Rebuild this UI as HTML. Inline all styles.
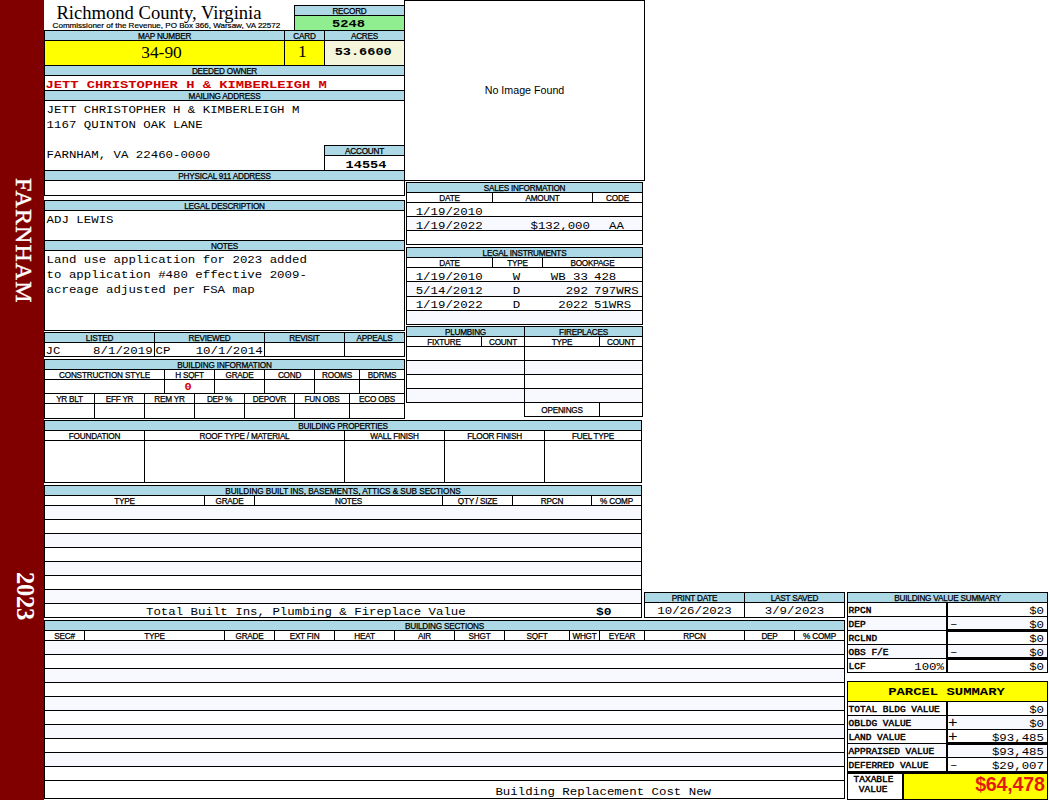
<!DOCTYPE html>
<html><head><meta charset="utf-8"><title>Richmond County, Virginia - Property Card</title>
<style>
html,body{margin:0;padding:0;background:#fff}
#p{position:relative;width:1050px;height:800px;overflow:hidden;background:#fff}
#p div{position:absolute;box-sizing:content-box;white-space:nowrap;overflow:visible}
.l{font-family:"Liberation Sans",sans-serif;font-size:8.2px;color:#000;letter-spacing:-.22px;-webkit-text-stroke:.25px #000}
.st{font-family:"Liberation Sans",sans-serif;font-size:8.05px;color:#000;-webkit-text-stroke:.2px #000}
.ti{font-family:"Liberation Serif",serif;font-size:18.6px;color:#000}
.se{font-family:"Liberation Serif",serif;color:#000}
.m{font-family:"Liberation Mono",monospace;font-size:12.4px;color:#000;transform:scaleY(.89);transform-origin:0 50%}
.mb{font-family:"Liberation Mono",monospace;font-weight:bold;color:#000;transform:scaleY(.85);transform-origin:0 50%}
.ow{font-family:"Liberation Mono",monospace;font-weight:bold;font-size:13.8px;color:#d00000;transform:scaleY(.84);transform-origin:0 50%}
.sl{font-family:"Liberation Mono",monospace;font-weight:normal;-webkit-text-stroke:.45px #000;font-size:9.5px;color:#000;transform:scaleY(.88);transform-origin:0 50%}
.ni{font-family:"Liberation Sans",sans-serif;font-size:10.7px;color:#000}
.tv{font-family:"Liberation Sans",sans-serif;font-weight:bold;font-size:19.7px;letter-spacing:-.25px;color:#e41a10}
.sb{font-family:"Liberation Serif",serif;color:#fff;width:0;height:0;overflow:visible}
.sb{transform:rotate(90deg);transform-origin:0 0}
</style></head>
<body><div id="p">
<div style="left:0px;top:0px;width:44px;height:800px;background:#800000;"></div>
<div class="sb" style="left:36px;top:178px;font-size:24px;line-height:24px;letter-spacing:1.05px;-webkit-text-stroke:.4px #fff">FARNHAM</div>
<div class="sb" style="left:36.6px;top:572px;font-size:24.6px;line-height:24px;letter-spacing:-.3px;font-weight:bold">2023</div>
<div class="ti" style="left:56.4px;top:1.5px;width:240px;height:22px;line-height:22px;text-align:left;">Richmond County, Virginia</div>
<div class="st" style="left:52.6px;top:21px;width:260px;height:10px;line-height:10px;text-align:left;">Commissioner of the Revenue, PO Box 366, Warsaw, VA 22572</div>
<div style="left:294px;top:5px;width:109px;height:24px;background:#90ee90;border:1px solid #000"></div>
<div style="left:295px;top:6px;width:109px;height:9px;background:#add8e6;"></div>
<div style="left:295px;top:15px;width:109px;height:1px;background:#000"></div>
<div class="l" style="left:295px;top:7px;width:109px;height:9px;line-height:9px;text-align:center;">RECORD</div>
<div class="mb" style="left:294px;top:17px;width:109px;height:14px;line-height:14px;text-align:center;font-size:13.8px">5248</div>
<div style="left:44px;top:30px;width:359px;height:164px;background:#fff;border:1px solid #000"></div>
<div style="left:45px;top:31px;width:359px;height:9px;background:#add8e6;"></div>
<div style="left:44px;top:40px;width:360px;height:1px;background:#000"></div>
<div style="left:284px;top:31px;width:1px;height:34px;background:#000"></div>
<div style="left:324px;top:31px;width:1px;height:34px;background:#000"></div>
<div class="l" style="left:45px;top:32px;width:239px;height:9px;line-height:9px;text-align:center;">MAP NUMBER</div>
<div class="l" style="left:285px;top:32px;width:39px;height:9px;line-height:9px;text-align:center;">CARD</div>
<div class="l" style="left:325px;top:32px;width:79px;height:9px;line-height:9px;text-align:center;">ACRES</div>
<div style="left:45px;top:41px;width:239px;height:24px;background:#ffff00;"></div>
<div style="left:285px;top:41px;width:39px;height:24px;background:#ffff00;"></div>
<div style="left:325px;top:41px;width:79px;height:24px;background:#f5f5dc;"></div>
<div class="se" style="left:42px;top:39.5px;width:239px;height:24px;line-height:24px;text-align:center;font-size:17.4px">34-90</div>
<div class="se" style="left:282.8px;top:39.2px;width:39px;height:24px;line-height:24px;text-align:center;font-size:17.4px">1</div>
<div class="mb" style="left:323.7px;top:40.3px;width:79px;height:24px;line-height:24px;text-align:center;font-size:13.6px">53.6600</div>
<div style="left:44px;top:65px;width:360px;height:1px;background:#000"></div>
<div style="left:45px;top:66px;width:359px;height:9px;background:#add8e6;"></div>
<div style="left:44px;top:75px;width:360px;height:1px;background:#000"></div>
<div class="l" style="left:45px;top:67px;width:359px;height:9px;line-height:9px;text-align:center;">DEEDED OWNER</div>
<div class="ow" style="left:45.4px;top:78px;width:356px;height:14px;line-height:14px;text-align:left;">JETT CHRISTOPHER H &amp; KIMBERLEIGH M</div>
<div style="left:44px;top:90px;width:360px;height:1px;background:#000"></div>
<div style="left:45px;top:91px;width:359px;height:9px;background:#add8e6;"></div>
<div style="left:44px;top:100px;width:360px;height:1px;background:#000"></div>
<div class="l" style="left:45px;top:92px;width:359px;height:9px;line-height:9px;text-align:center;">MAILING ADDRESS</div>
<div class="m" style="left:46.6px;top:102.5px;width:300px;height:15px;line-height:15px;text-align:left;">JETT CHRISTOPHER H &amp; KIMBERLEIGH M</div>
<div class="m" style="left:46.6px;top:117.5px;width:300px;height:15px;line-height:15px;text-align:left;">1167 QUINTON OAK LANE</div>
<div class="m" style="left:46.6px;top:147.5px;width:300px;height:15px;line-height:15px;text-align:left;">FARNHAM, VA 22460-0000</div>
<div style="left:324px;top:145px;width:79px;height:24px;background:#fff;border:1px solid #000"></div>
<div style="left:325px;top:146px;width:79px;height:9px;background:#add8e6;"></div>
<div style="left:325px;top:155px;width:79px;height:1px;background:#000"></div>
<div class="l" style="left:325px;top:147px;width:79px;height:9px;line-height:9px;text-align:center;">ACCOUNT</div>
<div class="mb" style="left:326.5px;top:158px;width:79px;height:14px;line-height:14px;text-align:center;font-size:13.6px">14554</div>
<div style="left:44px;top:170px;width:360px;height:1px;background:#000"></div>
<div style="left:45px;top:171px;width:359px;height:9px;background:#add8e6;"></div>
<div style="left:44px;top:180px;width:360px;height:1px;background:#000"></div>
<div class="l" style="left:45px;top:172px;width:359px;height:9px;line-height:9px;text-align:center;">PHYSICAL 911 ADDRESS</div>
<div style="left:44px;top:200px;width:359px;height:129px;background:#fff;border:1px solid #000"></div>
<div style="left:45px;top:201px;width:359px;height:9px;background:#add8e6;"></div>
<div style="left:44px;top:210px;width:360px;height:1px;background:#000"></div>
<div class="l" style="left:45px;top:202px;width:359px;height:9px;line-height:9px;text-align:center;">LEGAL DESCRIPTION</div>
<div class="m" style="left:46.6px;top:212.5px;width:300px;height:15px;line-height:15px;text-align:left;">ADJ LEWIS</div>
<div style="left:44px;top:240px;width:360px;height:1px;background:#000"></div>
<div style="left:45px;top:241px;width:359px;height:9px;background:#add8e6;"></div>
<div style="left:44px;top:250px;width:360px;height:1px;background:#000"></div>
<div class="l" style="left:45px;top:242px;width:359px;height:9px;line-height:9px;text-align:center;">NOTES</div>
<div class="m" style="left:46.6px;top:252.5px;width:340px;height:15px;line-height:15px;text-align:left;">Land use application for 2023 added</div>
<div class="m" style="left:46.6px;top:267.5px;width:340px;height:15px;line-height:15px;text-align:left;">to application #480 effective 2009-</div>
<div class="m" style="left:46.6px;top:282.5px;width:340px;height:15px;line-height:15px;text-align:left;">acreage adjusted per FSA map</div>
<div style="left:44px;top:332px;width:359px;height:23px;background:#fff;border:1px solid #000"></div>
<div style="left:45px;top:333px;width:359px;height:9px;background:#add8e6;"></div>
<div style="left:44px;top:342px;width:360px;height:1px;background:#000"></div>
<div style="left:154px;top:333px;width:1px;height:23px;background:#000"></div>
<div style="left:264px;top:333px;width:1px;height:23px;background:#000"></div>
<div style="left:344px;top:333px;width:1px;height:23px;background:#000"></div>
<div class="l" style="left:45px;top:334px;width:109px;height:9px;line-height:9px;text-align:center;">LISTED</div>
<div class="l" style="left:155px;top:334px;width:109px;height:9px;line-height:9px;text-align:center;">REVIEWED</div>
<div class="l" style="left:265px;top:334px;width:79px;height:9px;line-height:9px;text-align:center;">REVISIT</div>
<div class="l" style="left:345px;top:334px;width:59px;height:9px;line-height:9px;text-align:center;">APPEALS</div>
<div class="m" style="left:45.6px;top:345px;width:108px;height:13px;line-height:13px;text-align:left;">JC</div>
<div class="m" style="left:46px;top:345px;width:106.6px;height:13px;line-height:13px;text-align:right;">8/1/2019</div>
<div class="m" style="left:155.6px;top:345px;width:108px;height:13px;line-height:13px;text-align:left;">CP</div>
<div class="m" style="left:156px;top:345px;width:106.6px;height:13px;line-height:13px;text-align:right;">10/1/2014</div>
<div style="left:44px;top:359px;width:359px;height:58px;background:#fff;border:1px solid #000"></div>
<div style="left:45px;top:360px;width:359px;height:9px;background:#add8e6;"></div>
<div style="left:44px;top:369px;width:360px;height:1px;background:#000"></div>
<div class="l" style="left:45px;top:361px;width:359px;height:9px;line-height:9px;text-align:center;letter-spacing:-.16px">BUILDING INFORMATION</div>
<div style="left:164px;top:370px;width:1px;height:23px;background:#000"></div>
<div style="left:214px;top:370px;width:1px;height:23px;background:#000"></div>
<div style="left:264px;top:370px;width:1px;height:23px;background:#000"></div>
<div style="left:314px;top:370px;width:1px;height:23px;background:#000"></div>
<div style="left:359px;top:370px;width:1px;height:23px;background:#000"></div>
<div class="l" style="left:45px;top:371px;width:119px;height:9px;line-height:9px;text-align:center;letter-spacing:-.17px">CONSTRUCTION STYLE</div>
<div class="l" style="left:165px;top:371px;width:49px;height:9px;line-height:9px;text-align:center;">H SQFT</div>
<div class="l" style="left:215px;top:371px;width:49px;height:9px;line-height:9px;text-align:center;">GRADE</div>
<div class="l" style="left:265px;top:371px;width:49px;height:9px;line-height:9px;text-align:center;">COND</div>
<div class="l" style="left:315px;top:371px;width:44px;height:9px;line-height:9px;text-align:center;">ROOMS</div>
<div class="l" style="left:360px;top:371px;width:44px;height:9px;line-height:9px;text-align:center;">BDRMS</div>
<div style="left:44px;top:379px;width:360px;height:1px;background:#000"></div>
<div style="left:44px;top:393px;width:360px;height:1px;background:#000"></div>
<div class="ow" style="left:163.6px;top:381.3px;width:49px;height:13px;line-height:13px;text-align:center;font-size:12px">0</div>
<div style="left:94px;top:394px;width:1px;height:24px;background:#000"></div>
<div style="left:144px;top:394px;width:1px;height:24px;background:#000"></div>
<div style="left:194px;top:394px;width:1px;height:24px;background:#000"></div>
<div style="left:244px;top:394px;width:1px;height:24px;background:#000"></div>
<div style="left:294px;top:394px;width:1px;height:24px;background:#000"></div>
<div style="left:349px;top:394px;width:1px;height:24px;background:#000"></div>
<div class="l" style="left:45px;top:395px;width:49px;height:9px;line-height:9px;text-align:center;">YR BLT</div>
<div class="l" style="left:95px;top:395px;width:49px;height:9px;line-height:9px;text-align:center;">EFF YR</div>
<div class="l" style="left:145px;top:395px;width:49px;height:9px;line-height:9px;text-align:center;">REM YR</div>
<div class="l" style="left:195px;top:395px;width:49px;height:9px;line-height:9px;text-align:center;">DEP %</div>
<div class="l" style="left:245px;top:395px;width:49px;height:9px;line-height:9px;text-align:center;">DEPOVR</div>
<div class="l" style="left:295px;top:395px;width:54px;height:9px;line-height:9px;text-align:center;">FUN OBS</div>
<div class="l" style="left:350px;top:395px;width:54px;height:9px;line-height:9px;text-align:center;">ECO OBS</div>
<div style="left:44px;top:403px;width:360px;height:1px;background:#000"></div>
<div style="left:404px;top:0px;width:239px;height:179px;background:#fff;border:1px solid #000"></div>
<div class="ni" style="left:405px;top:82px;width:239px;height:16px;line-height:16px;text-align:center;">No Image Found</div>
<div style="left:406px;top:182px;width:235px;height:61px;background:#fff;border:1px solid #000"></div>
<div style="left:407px;top:183px;width:235px;height:9px;background:#add8e6;"></div>
<div style="left:406px;top:192px;width:236px;height:1px;background:#000"></div>
<div class="l" style="left:407px;top:184px;width:235px;height:9px;line-height:9px;text-align:center;">SALES INFORMATION</div>
<div style="left:492px;top:193px;width:1px;height:9px;background:#000"></div>
<div style="left:592px;top:193px;width:1px;height:9px;background:#000"></div>
<div style="left:406px;top:202px;width:236px;height:1px;background:#000"></div>
<div class="l" style="left:407px;top:194px;width:85px;height:9px;line-height:9px;text-align:center;">DATE</div>
<div class="l" style="left:493px;top:194px;width:99px;height:9px;line-height:9px;text-align:center;">AMOUNT</div>
<div class="l" style="left:593px;top:194px;width:49px;height:9px;line-height:9px;text-align:center;">CODE</div>
<div style="left:407px;top:217px;width:235px;height:14px;background:#f8f8ff;"></div>
<div style="left:406px;top:216px;width:236px;height:1px;background:#000"></div>
<div style="left:406px;top:230px;width:236px;height:1px;background:#000"></div>
<div class="m" style="left:415.7px;top:204.7px;width:80px;height:14px;line-height:14px;text-align:left;">1/19/2010</div>
<div class="m" style="left:415.7px;top:218.7px;width:80px;height:14px;line-height:14px;text-align:left;">1/19/2022</div>
<div class="m" style="left:500px;top:218.7px;width:90px;height:14px;line-height:14px;text-align:right;">$132,000</div>
<div class="m" style="left:592px;top:218.7px;width:49px;height:14px;line-height:14px;text-align:center;">AA</div>
<div style="left:406px;top:247px;width:235px;height:76px;background:#fff;border:1px solid #000"></div>
<div style="left:407px;top:248px;width:235px;height:9px;background:#add8e6;"></div>
<div style="left:406px;top:257px;width:236px;height:1px;background:#000"></div>
<div class="l" style="left:407px;top:249px;width:235px;height:9px;line-height:9px;text-align:center;">LEGAL INSTRUMENTS</div>
<div style="left:492px;top:258px;width:1px;height:9px;background:#000"></div>
<div style="left:542px;top:258px;width:1px;height:9px;background:#000"></div>
<div style="left:406px;top:267px;width:236px;height:1px;background:#000"></div>
<div class="l" style="left:407px;top:259px;width:85px;height:9px;line-height:9px;text-align:center;">DATE</div>
<div class="l" style="left:493px;top:259px;width:49px;height:9px;line-height:9px;text-align:center;">TYPE</div>
<div class="l" style="left:543px;top:259px;width:99px;height:9px;line-height:9px;text-align:center;">BOOKPAGE</div>
<div style="left:407px;top:282px;width:235px;height:14px;background:#f8f8ff;"></div>
<div style="left:407px;top:311px;width:235px;height:13px;background:#f8f8ff;"></div>
<div style="left:406px;top:281px;width:236px;height:1px;background:#000"></div>
<div style="left:406px;top:296px;width:236px;height:1px;background:#000"></div>
<div style="left:406px;top:310px;width:236px;height:1px;background:#000"></div>
<div class="m" style="left:415.7px;top:269.7px;width:80px;height:14px;line-height:14px;text-align:left;">1/19/2010</div>
<div class="m" style="left:492px;top:269.7px;width:49px;height:14px;line-height:14px;text-align:center;">W</div>
<div class="m" style="left:500px;top:269.7px;width:88px;height:14px;line-height:14px;text-align:right;">WB 33</div>
<div class="m" style="left:594px;top:269.7px;width:48px;height:14px;line-height:14px;text-align:left;">428</div>
<div class="m" style="left:415.7px;top:283.7px;width:80px;height:14px;line-height:14px;text-align:left;">5/14/2012</div>
<div class="m" style="left:492px;top:283.7px;width:49px;height:14px;line-height:14px;text-align:center;">D</div>
<div class="m" style="left:500px;top:283.7px;width:88px;height:14px;line-height:14px;text-align:right;">292</div>
<div class="m" style="left:594px;top:283.7px;width:48px;height:14px;line-height:14px;text-align:left;">797WRS</div>
<div class="m" style="left:415.7px;top:297.7px;width:80px;height:14px;line-height:14px;text-align:left;">1/19/2022</div>
<div class="m" style="left:492px;top:297.7px;width:49px;height:14px;line-height:14px;text-align:center;">D</div>
<div class="m" style="left:500px;top:297.7px;width:88px;height:14px;line-height:14px;text-align:right;">2022</div>
<div class="m" style="left:594px;top:297.7px;width:48px;height:14px;line-height:14px;text-align:left;">51WRS</div>
<div style="left:406px;top:326px;width:117px;height:75px;background:#fff;border:1px solid #000"></div>
<div style="left:524px;top:326px;width:117px;height:89px;background:#fff;border:1px solid #000"></div>
<div style="left:407px;top:327px;width:117px;height:9px;background:#add8e6;"></div>
<div style="left:525px;top:327px;width:117px;height:9px;background:#add8e6;"></div>
<div style="left:406px;top:336px;width:236px;height:1px;background:#000"></div>
<div style="left:406px;top:346px;width:236px;height:1px;background:#000"></div>
<div class="l" style="left:407px;top:328px;width:117px;height:9px;line-height:9px;text-align:center;">PLUMBING</div>
<div class="l" style="left:525px;top:328px;width:117px;height:9px;line-height:9px;text-align:center;">FIREPLACES</div>
<div style="left:481px;top:337px;width:1px;height:9px;background:#000"></div>
<div style="left:599px;top:337px;width:1px;height:9px;background:#000"></div>
<div class="l" style="left:407px;top:338px;width:74px;height:9px;line-height:9px;text-align:center;">FIXTURE</div>
<div class="l" style="left:482px;top:338px;width:42px;height:9px;line-height:9px;text-align:center;">COUNT</div>
<div class="l" style="left:525px;top:338px;width:74px;height:9px;line-height:9px;text-align:center;">TYPE</div>
<div class="l" style="left:600px;top:338px;width:42px;height:9px;line-height:9px;text-align:center;">COUNT</div>
<div style="left:407px;top:361px;width:117px;height:13px;background:#f8f8ff;"></div>
<div style="left:525px;top:361px;width:117px;height:13px;background:#f8f8ff;"></div>
<div style="left:407px;top:389px;width:117px;height:13px;background:#f8f8ff;"></div>
<div style="left:525px;top:389px;width:117px;height:13px;background:#f8f8ff;"></div>
<div style="left:406px;top:360px;width:236px;height:1px;background:#000"></div>
<div style="left:406px;top:374px;width:236px;height:1px;background:#000"></div>
<div style="left:406px;top:388px;width:236px;height:1px;background:#000"></div>
<div style="left:406px;top:402px;width:236px;height:1px;background:#000"></div>
<div style="left:599px;top:403px;width:1px;height:13px;background:#000"></div>
<div class="l" style="left:525px;top:406px;width:74px;height:9px;line-height:9px;text-align:center;">OPENINGS</div>
<div style="left:44px;top:420px;width:596px;height:61px;background:#fff;border:1px solid #000"></div>
<div style="left:45px;top:421px;width:596px;height:9px;background:#add8e6;"></div>
<div style="left:44px;top:430px;width:597px;height:1px;background:#000"></div>
<div class="l" style="left:45px;top:422px;width:596px;height:9px;line-height:9px;text-align:center;">BUILDING PROPERTIES</div>
<div style="left:144px;top:431px;width:1px;height:51px;background:#000"></div>
<div style="left:344px;top:431px;width:1px;height:51px;background:#000"></div>
<div style="left:444px;top:431px;width:1px;height:51px;background:#000"></div>
<div style="left:544px;top:431px;width:1px;height:51px;background:#000"></div>
<div class="l" style="left:45px;top:432px;width:99px;height:9px;line-height:9px;text-align:center;">FOUNDATION</div>
<div class="l" style="left:145px;top:432px;width:199px;height:9px;line-height:9px;text-align:center;">ROOF TYPE / MATERIAL</div>
<div class="l" style="left:345px;top:432px;width:99px;height:9px;line-height:9px;text-align:center;">WALL FINISH</div>
<div class="l" style="left:445px;top:432px;width:99px;height:9px;line-height:9px;text-align:center;">FLOOR FINISH</div>
<div class="l" style="left:545px;top:432px;width:96px;height:9px;line-height:9px;text-align:center;">FUEL TYPE</div>
<div style="left:44px;top:440px;width:597px;height:1px;background:#000"></div>
<div style="left:44px;top:485px;width:596px;height:131px;background:#fff;border:1px solid #000"></div>
<div style="left:45px;top:486px;width:596px;height:9px;background:#add8e6;"></div>
<div style="left:44px;top:495px;width:597px;height:1px;background:#000"></div>
<div class="l" style="left:45px;top:487px;width:596px;height:9px;line-height:9px;text-align:center;letter-spacing:-.05px">BUILDING BUILT INS, BASEMENTS, ATTICS &amp; SUB SECTIONS</div>
<div style="left:204px;top:496px;width:1px;height:9px;background:#000"></div>
<div style="left:254px;top:496px;width:1px;height:9px;background:#000"></div>
<div style="left:442px;top:496px;width:1px;height:9px;background:#000"></div>
<div style="left:512px;top:496px;width:1px;height:9px;background:#000"></div>
<div style="left:591px;top:496px;width:1px;height:9px;background:#000"></div>
<div class="l" style="left:45px;top:497px;width:159px;height:9px;line-height:9px;text-align:center;">TYPE</div>
<div class="l" style="left:205px;top:497px;width:49px;height:9px;line-height:9px;text-align:center;">GRADE</div>
<div class="l" style="left:255px;top:497px;width:187px;height:9px;line-height:9px;text-align:center;">NOTES</div>
<div class="l" style="left:443px;top:497px;width:69px;height:9px;line-height:9px;text-align:center;">QTY / SIZE</div>
<div class="l" style="left:513px;top:497px;width:78px;height:9px;line-height:9px;text-align:center;">RPCN</div>
<div class="l" style="left:592px;top:497px;width:49px;height:9px;line-height:9px;text-align:center;">% COMP</div>
<div style="left:44px;top:505px;width:597px;height:1px;background:#000"></div>
<div style="left:45px;top:506px;width:596px;height:13px;background:#f8f8ff;"></div>
<div style="left:44px;top:519px;width:597px;height:1px;background:#000"></div>
<div style="left:44px;top:533px;width:597px;height:1px;background:#000"></div>
<div style="left:45px;top:534px;width:596px;height:13px;background:#f8f8ff;"></div>
<div style="left:44px;top:547px;width:597px;height:1px;background:#000"></div>
<div style="left:44px;top:561px;width:597px;height:1px;background:#000"></div>
<div style="left:45px;top:562px;width:596px;height:13px;background:#f8f8ff;"></div>
<div style="left:44px;top:575px;width:597px;height:1px;background:#000"></div>
<div style="left:44px;top:589px;width:597px;height:1px;background:#000"></div>
<div style="left:45px;top:590px;width:596px;height:13px;background:#f8f8ff;"></div>
<div style="left:44px;top:603px;width:597px;height:1px;background:#000"></div>
<div class="m" style="left:146px;top:605.5px;width:400px;height:13px;line-height:13px;text-align:left;">Total Built Ins, Plumbing &amp; Fireplace Value</div>
<div class="mb" style="left:559.5px;top:605.5px;width:52px;height:13px;line-height:13px;text-align:right;font-size:13px">$0</div>
<div style="left:644px;top:592px;width:199px;height:24px;background:#fff;border:1px solid #000"></div>
<div style="left:645px;top:593px;width:199px;height:9px;background:#add8e6;"></div>
<div style="left:644px;top:602px;width:200px;height:1px;background:#000"></div>
<div style="left:744px;top:593px;width:1px;height:24px;background:#000"></div>
<div class="l" style="left:645px;top:594px;width:99px;height:9px;line-height:9px;text-align:center;">PRINT DATE</div>
<div class="l" style="left:745px;top:594px;width:99px;height:9px;line-height:9px;text-align:center;">LAST SAVED</div>
<div class="m" style="left:645px;top:604.2px;width:99px;height:14px;line-height:14px;text-align:center;">10/26/2023</div>
<div class="m" style="left:745px;top:604.2px;width:99px;height:14px;line-height:14px;text-align:center;">3/9/2023</div>
<div style="left:44px;top:620px;width:799px;height:177px;background:#fff;border:1px solid #000"></div>
<div style="left:45px;top:621px;width:799px;height:9px;background:#add8e6;"></div>
<div style="left:44px;top:630px;width:800px;height:1px;background:#000"></div>
<div class="l" style="left:45px;top:622px;width:799px;height:9px;line-height:9px;text-align:center;">BUILDING SECTIONS</div>
<div style="left:84px;top:631px;width:1px;height:9px;background:#000"></div>
<div style="left:224px;top:631px;width:1px;height:9px;background:#000"></div>
<div style="left:274px;top:631px;width:1px;height:9px;background:#000"></div>
<div style="left:334px;top:631px;width:1px;height:9px;background:#000"></div>
<div style="left:394px;top:631px;width:1px;height:9px;background:#000"></div>
<div style="left:454px;top:631px;width:1px;height:9px;background:#000"></div>
<div style="left:504px;top:631px;width:1px;height:9px;background:#000"></div>
<div style="left:569px;top:631px;width:1px;height:9px;background:#000"></div>
<div style="left:599px;top:631px;width:1px;height:9px;background:#000"></div>
<div style="left:644px;top:631px;width:1px;height:9px;background:#000"></div>
<div style="left:744px;top:631px;width:1px;height:9px;background:#000"></div>
<div style="left:794px;top:631px;width:1px;height:9px;background:#000"></div>
<div class="l" style="left:45px;top:632px;width:39px;height:9px;line-height:9px;text-align:center;">SEC#</div>
<div class="l" style="left:85px;top:632px;width:139px;height:9px;line-height:9px;text-align:center;">TYPE</div>
<div class="l" style="left:225px;top:632px;width:49px;height:9px;line-height:9px;text-align:center;">GRADE</div>
<div class="l" style="left:275px;top:632px;width:59px;height:9px;line-height:9px;text-align:center;">EXT FIN</div>
<div class="l" style="left:335px;top:632px;width:59px;height:9px;line-height:9px;text-align:center;">HEAT</div>
<div class="l" style="left:395px;top:632px;width:59px;height:9px;line-height:9px;text-align:center;">AIR</div>
<div class="l" style="left:455px;top:632px;width:49px;height:9px;line-height:9px;text-align:center;">SHGT</div>
<div class="l" style="left:505px;top:632px;width:64px;height:9px;line-height:9px;text-align:center;">SQFT</div>
<div class="l" style="left:570px;top:632px;width:29px;height:9px;line-height:9px;text-align:center;">WHGT</div>
<div class="l" style="left:600px;top:632px;width:44px;height:9px;line-height:9px;text-align:center;">EYEAR</div>
<div class="l" style="left:645px;top:632px;width:99px;height:9px;line-height:9px;text-align:center;">RPCN</div>
<div class="l" style="left:745px;top:632px;width:49px;height:9px;line-height:9px;text-align:center;">DEP</div>
<div class="l" style="left:795px;top:632px;width:49px;height:9px;line-height:9px;text-align:center;">% COMP</div>
<div style="left:44px;top:640px;width:800px;height:1px;background:#000"></div>
<div style="left:45px;top:641px;width:799px;height:13px;background:#f8f8ff;"></div>
<div style="left:44px;top:654px;width:800px;height:1px;background:#000"></div>
<div style="left:44px;top:668px;width:800px;height:1px;background:#000"></div>
<div style="left:45px;top:669px;width:799px;height:13px;background:#f8f8ff;"></div>
<div style="left:44px;top:682px;width:800px;height:1px;background:#000"></div>
<div style="left:44px;top:696px;width:800px;height:1px;background:#000"></div>
<div style="left:45px;top:697px;width:799px;height:13px;background:#f8f8ff;"></div>
<div style="left:44px;top:710px;width:800px;height:1px;background:#000"></div>
<div style="left:44px;top:724px;width:800px;height:1px;background:#000"></div>
<div style="left:45px;top:725px;width:799px;height:13px;background:#f8f8ff;"></div>
<div style="left:44px;top:738px;width:800px;height:1px;background:#000"></div>
<div style="left:44px;top:752px;width:800px;height:1px;background:#000"></div>
<div style="left:45px;top:753px;width:799px;height:13px;background:#f8f8ff;"></div>
<div style="left:44px;top:766px;width:800px;height:1px;background:#000"></div>
<div style="left:44px;top:780px;width:800px;height:1px;background:#000"></div>
<div class="m" style="left:495.4px;top:785px;width:360px;height:14px;line-height:14px;text-align:left;">Building Replacement Cost New</div>
<div style="left:847px;top:592px;width:199px;height:79px;background:#fff;border:1px solid #000"></div>
<div style="left:848px;top:593px;width:199px;height:9px;background:#add8e6;"></div>
<div style="left:847px;top:602px;width:200px;height:1px;background:#000"></div>
<div class="l" style="left:848px;top:594px;width:199px;height:9px;line-height:9px;text-align:center;">BUILDING VALUE SUMMARY</div>
<div class="sl" style="left:848.6px;top:604.4px;width:97px;height:13px;line-height:13px;text-align:left;">RPCN</div>
<div class="m" style="left:950px;top:605px;width:94px;height:13px;line-height:13px;text-align:right;">$0</div>
<div style="left:848px;top:617px;width:199px;height:13px;background:#f8f8ff;"></div>
<div style="left:847px;top:616px;width:200px;height:1px;background:#000"></div>
<div class="sl" style="left:848.6px;top:618.4px;width:97px;height:13px;line-height:13px;text-align:left;">DEP</div>
<div class="m" style="left:950px;top:618px;width:12px;height:13px;line-height:13px;text-align:left;">–</div>
<div class="m" style="left:950px;top:619px;width:94px;height:13px;line-height:13px;text-align:right;">$0</div>
<div style="left:847px;top:630px;width:200px;height:1px;background:#000"></div>
<div class="sl" style="left:848.6px;top:632.4px;width:97px;height:13px;line-height:13px;text-align:left;">RCLND</div>
<div class="m" style="left:950px;top:633px;width:94px;height:13px;line-height:13px;text-align:right;">$0</div>
<div style="left:848px;top:645px;width:199px;height:13px;background:#f8f8ff;"></div>
<div style="left:847px;top:644px;width:200px;height:1px;background:#000"></div>
<div class="sl" style="left:848.6px;top:646.4px;width:97px;height:13px;line-height:13px;text-align:left;">OBS F/E</div>
<div class="m" style="left:950px;top:646px;width:12px;height:13px;line-height:13px;text-align:left;">–</div>
<div class="m" style="left:950px;top:647px;width:94px;height:13px;line-height:13px;text-align:right;">$0</div>
<div style="left:847px;top:658px;width:200px;height:1px;background:#000"></div>
<div class="sl" style="left:848.6px;top:660.4px;width:97px;height:13px;line-height:13px;text-align:left;">LCF</div>
<div class="m" style="left:950px;top:661px;width:94px;height:13px;line-height:13px;text-align:right;">$0</div>
<div class="m" style="left:849px;top:661px;width:95px;height:13px;line-height:13px;text-align:right;">100%</div>
<div style="left:946px;top:603px;width:2px;height:69px;background:#000"></div>
<div style="left:947px;top:629px;width:100px;height:3px;background:#000"></div>
<div style="left:947px;top:657px;width:100px;height:3px;background:#000"></div>
<div style="left:847px;top:681px;width:199px;height:117px;background:#fff;border:1px solid #000"></div>
<div style="left:848px;top:682px;width:199px;height:19px;background:#ffff00;"></div>
<div style="left:847px;top:701px;width:200px;height:1px;background:#000"></div>
<div class="mb" style="left:847px;top:683px;width:199px;height:19px;line-height:19px;text-align:center;font-size:13.9px">PARCEL SUMMARY</div>
<div class="sl" style="left:848.6px;top:703.4px;width:97px;height:13px;line-height:13px;text-align:left;">TOTAL BLDG VALUE</div>
<div class="m" style="left:950px;top:704px;width:94px;height:13px;line-height:13px;text-align:right;">$0</div>
<div style="left:848px;top:716px;width:199px;height:13px;background:#f8f8ff;"></div>
<div style="left:847px;top:715px;width:200px;height:1px;background:#000"></div>
<div class="sl" style="left:848.6px;top:717.4px;width:97px;height:13px;line-height:13px;text-align:left;">OBLDG VALUE</div>
<div class="m" style="left:948px;top:717.4px;width:12px;height:13px;line-height:13px;text-align:left;font-size:16px">+</div>
<div class="m" style="left:950px;top:718px;width:94px;height:13px;line-height:13px;text-align:right;">$0</div>
<div style="left:847px;top:729px;width:200px;height:1px;background:#000"></div>
<div class="sl" style="left:848.6px;top:731.4px;width:97px;height:13px;line-height:13px;text-align:left;">LAND VALUE</div>
<div class="m" style="left:948px;top:731.4px;width:12px;height:13px;line-height:13px;text-align:left;font-size:16px">+</div>
<div class="m" style="left:950px;top:732px;width:94px;height:13px;line-height:13px;text-align:right;">$93,485</div>
<div style="left:848px;top:744px;width:199px;height:13px;background:#f8f8ff;"></div>
<div style="left:847px;top:743px;width:200px;height:1px;background:#000"></div>
<div class="sl" style="left:848.6px;top:745.4px;width:97px;height:13px;line-height:13px;text-align:left;">APPRAISED VALUE</div>
<div class="m" style="left:950px;top:746px;width:94px;height:13px;line-height:13px;text-align:right;">$93,485</div>
<div style="left:847px;top:757px;width:200px;height:1px;background:#000"></div>
<div class="sl" style="left:848.6px;top:759.4px;width:97px;height:13px;line-height:13px;text-align:left;">DEFERRED VALUE</div>
<div class="m" style="left:950px;top:759px;width:12px;height:13px;line-height:13px;text-align:left;">–</div>
<div class="m" style="left:950px;top:760px;width:94px;height:13px;line-height:13px;text-align:right;">$29,007</div>
<div style="left:946px;top:702px;width:2px;height:69px;background:#000"></div>
<div style="left:947px;top:742px;width:100px;height:3px;background:#000"></div>
<div style="left:847px;top:771px;width:200px;height:3px;background:#000"></div>
<div style="left:903px;top:774px;width:144px;height:25px;background:#ffff00;"></div>
<div style="left:902px;top:774px;width:2px;height:25px;background:#000"></div>
<div class="sl" style="left:846px;top:774.3px;width:55px;height:11px;line-height:11px;text-align:center;">TAXABLE</div>
<div class="sl" style="left:845.6px;top:783.7px;width:55px;height:11px;line-height:11px;text-align:center;">VALUE</div>
<div class="tv" style="left:903px;top:770.9px;width:141.6px;height:26px;line-height:26px;text-align:right;">$64,478</div>
</div></body></html>
